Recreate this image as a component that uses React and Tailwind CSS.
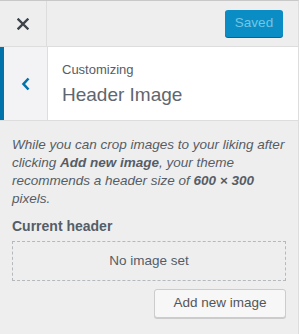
import React from 'react'

const font = { fontFamily: '"Liberation Sans", Arial, sans-serif' }

function CloseIcon() {
  return (
    <svg width="12" height="12" viewBox="0 0 12 12">
      <path d="M1.5 1.5 L10.5 10.5 M10.5 1.5 L1.5 10.5" stroke="#3c434a" strokeWidth="2.4" strokeLinecap="square" />
    </svg>
  )
}

function BackIcon() {
  return (
    <svg width="10" height="14" viewBox="0 0 10 14">
      <path d="M7.5 1.5 L2.5 7 L7.5 12.5" stroke="#0073aa" strokeWidth="2.6" fill="none" />
    </svg>
  )
}

export default function App() {
  return (
    <div className="w-[300px] h-[334px] bg-white" style={font}>
      <div className="w-[299px] h-[334px] bg-[#eeeeee] border-r border-[#dddddd] border-t border-t-[#c8c8c8] flex flex-col">
        {/* top bar */}
        <div className="h-[46px] flex items-center border-b border-[#dddddd] shrink-0">
          <button className="w-[47px] h-full flex items-center justify-center border-r border-[#dddddd]">
            <CloseIcon />
          </button>
          <div className="flex-1 flex justify-end pr-[15px]">
            <button className="w-[58px] h-[27px] rounded-[3px] bg-[#0a8dc4] text-[#72c6e6] text-[13.5px] shadow-[0_1px_0_#006799]">
              Saved
            </button>
          </div>
        </div>

        {/* section header */}
        <div className="h-[74px] flex bg-white border-b border-[#dddddd] shrink-0">
          <button className="w-[48px] h-full flex items-center justify-center bg-[#f3f3f5] border-l-4 border-[#0073aa] border-r border-r-[#dddddd]">
            <BackIcon />
          </button>
          <div className="flex-1 pl-[14px] pt-[14px] text-[#555d66]">
            <div className="text-[13px] leading-[18px]">Customizing</div>
            <div className="mt-[2px] text-[19px] leading-[28px] font-light text-[#5f666e]">Header Image</div>
          </div>
        </div>

        {/* content */}
        <div className="px-[12px] pt-[15px] text-[#555d66]">
          <p className="italic text-[13.5px] leading-[18px]">
            While you can crop images to your liking after clicking <b>Add new image</b>, your theme recommends a header size of <b>600 × 300</b> pixels.
          </p>
          <div className="mt-[9px] text-[14px] font-bold leading-[18px]">Current header</div>
          <div className="mt-[6px] h-[40px] border border-dashed border-[#b4b9be] flex items-center justify-center text-[13.5px]">
            No image set
          </div>
          <div className="mt-[8px] flex justify-end">
            <button className="h-[29px] w-[132px] rounded-[3px] border border-[#cccccc] bg-[#f7f7f7] shadow-[0_1px_0_#cccccc] text-[13.5px] text-[#555555]">
              Add new image
            </button>
          </div>
        </div>
      </div>
    </div>
  )
}
